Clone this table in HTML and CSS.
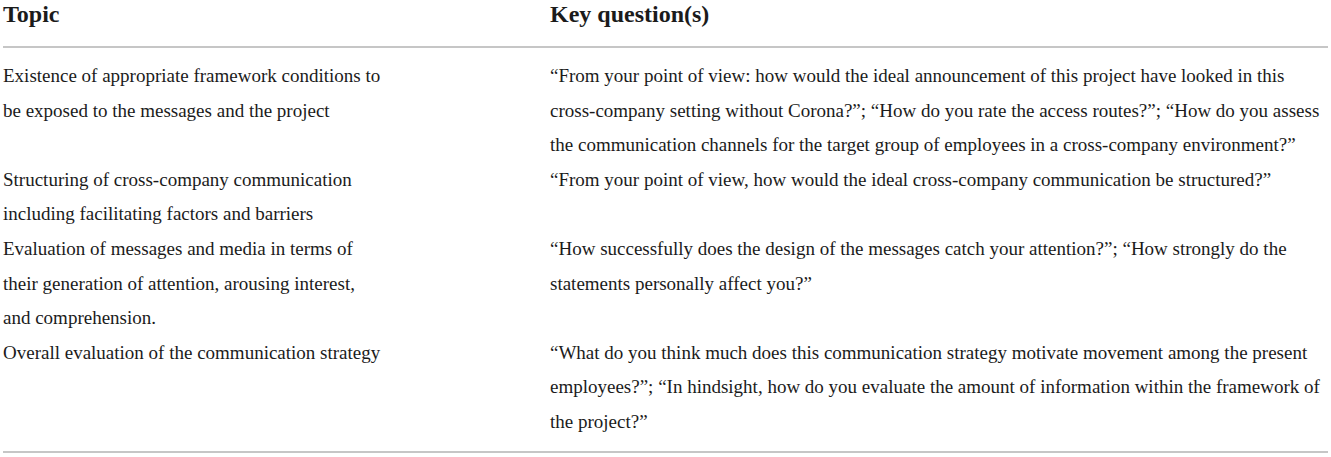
FILE: index.html
```html
<!DOCTYPE html>
<html lang="en">
<head>
<meta charset="utf-8">
<title>Topics and key questions</title>
<link rel="stylesheet" href="styles.css">
</head>
<body>
<table class="qtable">
  <thead>
    <tr>
      <th class="col-topic">Topic</th>
      <th class="col-question">Key question(s)</th>
    </tr>
  </thead>
  <tbody>
    <tr class="first">
      <td>Existence of appropriate framework conditions to<br>be exposed to the messages and the project</td>
      <td>“From your point of view: how would the ideal announcement of this project have looked in this cross-company setting without Corona?”; “How do you rate the access routes?”; “How do you assess the communication channels for the target group of employees in a cross-company environment?”</td>
    </tr>
    <tr>
      <td>Structuring of cross-company communication<br>including facilitating factors and barriers</td>
      <td>“From your point of view, how would the ideal cross-company communication be structured?”</td>
    </tr>
    <tr>
      <td>Evaluation of messages and media in terms of<br>their generation of attention, arousing interest,<br>and comprehension.</td>
      <td>“How successfully does the design of the messages catch your attention?”; “How strongly do the statements personally affect you?”</td>
    </tr>
    <tr class="last">
      <td>Overall evaluation of the communication strategy</td>
      <td>“What do you think much does this communication strategy motivate movement among the present employees?”; “In hindsight, how do you evaluate the amount of information within the framework of the project?”</td>
    </tr>
  </tbody>
</table>
</body>
</html>
```

FILE: styles.css
```css
html, body {
  margin: 0;
  padding: 0;
  background: #ffffff;
}

.qtable {
  margin: 0 0 0 3px;
  width: 1325px;
  border-collapse: collapse;
  font-family: "Liberation Serif", "Times New Roman", serif;
  color: #1b1b1b;
  table-layout: fixed;
}

.qtable th {
  text-align: left;
  font-weight: 700;
  font-size: 24px;
  line-height: 28px;
  padding: 0 0 18px 0;
  border-bottom: 2px solid #c6c6c6;
  vertical-align: top;
}

.col-topic {
  width: 547px;
}

.qtable td {
  font-size: 19px;
  line-height: 34.6px;
  padding: 0;
  vertical-align: top;
}

.qtable td + td,
.qtable th + th {
  padding-left: 0;
}

.qtable tr.first td {
  padding-top: 11px;
}

.qtable tr.last td {
  padding-bottom: 11px;
  border-bottom: 2px solid #c6c6c6;
}
```
